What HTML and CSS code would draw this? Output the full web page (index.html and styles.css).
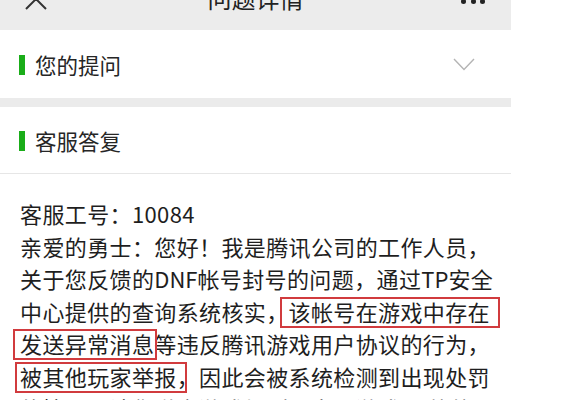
FILE: index.html
```html
<!DOCTYPE html>
<html lang="zh-CN">
<head>
    <meta charset="UTF-8">
    <meta name="viewport" content="width=device-width, initial-scale=1.0">
    <title>问题详情</title>
    <link rel="stylesheet" href="styles.css">
</head>
<body>
    <div class="page">
        <header class="topbar">
            <svg class="close" width="22" height="22" viewBox="0 0 22 22">
                <path d="M1 1 L21 21 M21 1 L1 21" stroke="#333" stroke-width="2" fill="none"/>
            </svg>
            <h1>问题详情</h1>
            <div class="more"><i></i><i></i><i></i></div>
        </header>

        <section class="panel">
            <div class="panel-head">
                <h2>您的提问</h2>
                <svg class="chevron" width="22" height="13" viewBox="0 0 22 13">
                    <path d="M1 1 L11 11.5 L21 1" stroke="#b4b4b4" stroke-width="1.4" fill="none"/>
                </svg>
            </div>
        </section>

        <section class="panel reply">
            <div class="panel-head">
                <h2>客服答复</h2>
            </div>
            <div class="reply-body">
                <p>客服工号：10084</p>
                <p>亲爱的勇士：您好！我是腾讯公司的工作人员，<br>
                关于您反馈的<span class="latin">DNF</span>帐号封号的问题，通过<span class="latin">TP</span>安全<br>
                中心提供的查询系统核实，<span class="mark mark-a">该帐号在游戏中存在</span><br>
                <span class="mark mark-b">发送异常消息</span>等违反腾讯游戏用户协议的行为，<br>
                <span class="mark mark-c">被其他玩家举报，</span>因此会被系统检测到出现处罚<br>
                的情况，请您遵守游戏规则，文明游戏，谢谢。</p>
            </div>
        </section>
    </div>
</body>
</html>
```

FILE: styles.css
```css
body {
    margin: 0;
    background: #fff;
    font-family: "Noto Sans CJK SC", "Noto Sans", sans-serif;
    color: #222;
}
.page {
    width: 511px;
    background: #ebebeb;
}
.topbar {
    height: 30px;
    background: #ececec;
    display: grid;
    grid-template-columns: 1fr auto 1fr;
    align-items: start;
    overflow: hidden;
}
.close {
    margin: -12px 0 0 25px;
}
.topbar h1 {
    margin: -14px 0 0;
    font-size: 24px;
    line-height: 24px;
    font-weight: normal;
    color: #222;
}
.more {
    justify-self: end;
    margin: -1px 26px 0 0;
    display: flex;
    gap: 4.5px;
}
.more i {
    width: 5px;
    height: 5px;
    border-radius: 50%;
    background: #222;
}
.panel {
    background: #fff;
    margin-bottom: 9px;
}
.panel-head {
    height: 68px;
    display: flex;
    align-items: center;
    justify-content: space-between;
    padding: 0 36px 0 19px;
}
.panel-head h2 {
    margin: 2px 0 0;
    font-size: 21.5px;
    font-weight: normal;
    color: #262626;
    border-left: 6px solid #1aad19;
    padding-left: 10px;
    line-height: 20px;
}
.chevron {
    margin-top: 1px;
}
.reply {
    margin-bottom: 0;
}
.reply .panel-head {
    height: 66px;
    border-bottom: 1px solid #e6e6e6;
}
.reply-body {
    padding: 23px 0 40px 20px;
    font-size: 22px;
    line-height: 32.5px;
    letter-spacing: 0.38px;
    color: #1e1e1e;
    white-space: nowrap;
}
.reply-body p {
    margin: 0;
}
.latin {
    letter-spacing: 0;
}
.mark {
    position: relative;
}
.mark::after {
    content: "";
    position: absolute;
    top: 2px;
    bottom: -1px;
    border: 2px solid #d13b3e;
}
.mark-a::after {
    left: -9px;
    right: -10px;
}
.mark-b::after {
    left: -7px;
    right: -3px;
}
.mark-c::after {
    left: -5px;
    right: 12px;
}
```
